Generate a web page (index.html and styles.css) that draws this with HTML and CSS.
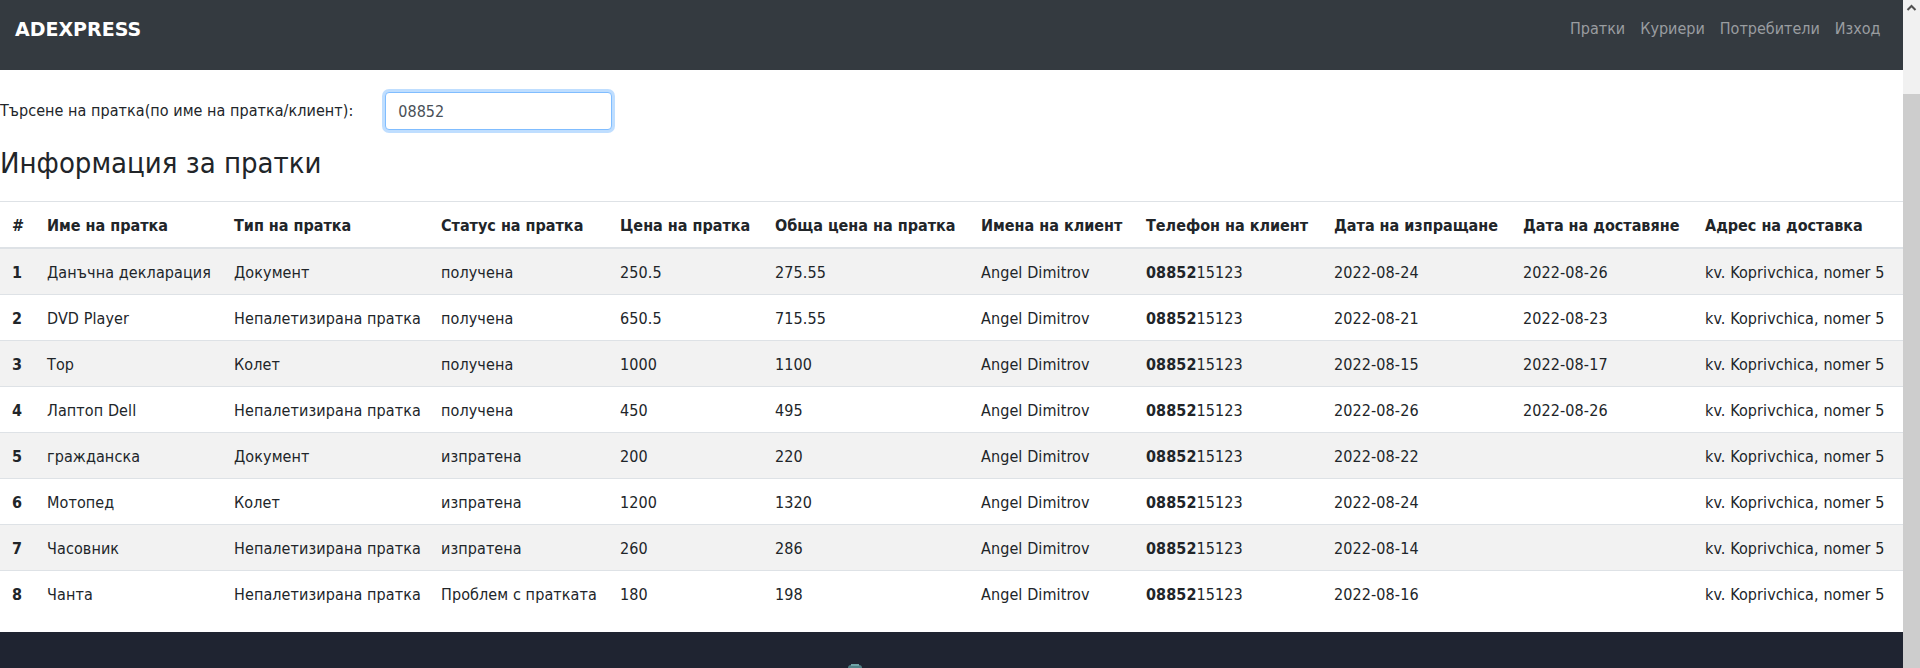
FILE: index.html
```html
<!DOCTYPE html>
<html lang="bg">
<head>
<meta charset="utf-8">
<title>ADEXPRESS</title>
<link rel="stylesheet" href="styles.css">
</head>
<body>
<div class="shell">
  <div class="page">
    <nav class="navbar">
      <a class="brand" href="#">ADEXPRESS</a>
      <ul class="nav">
        <li><a class="nav-link" href="#">Пратки</a></li>
        <li><a class="nav-link" href="#">Куриери</a></li>
        <li><a class="nav-link" href="#">Потребители</a></li>
        <li><a class="nav-link" href="#">Изход</a></li>
      </ul>
    </nav>
    <main class="content">
      <div class="search">
        <label class="search-label" for="q">Търсене на пратка(по име на пратка/клиент):</label>
        <input class="search-input" id="q" type="text" value="08852">
      </div>
      <h3 class="title">Информация за пратки</h3>
      <table class="table">
        <colgroup>
          <col class="c1"><col class="c2"><col class="c3"><col class="c4"><col class="c5"><col class="c6"><col class="c7"><col class="c8"><col class="c9"><col class="c10"><col class="c11">
        </colgroup>
        <thead>
          <tr>
            <th>#</th><th>Име на пратка</th><th>Тип на пратка</th><th>Статус на пратка</th><th>Цена на пратка</th><th>Обща цена на пратка</th><th>Имена на клиент</th><th>Телефон на клиент</th><th>Дата на изпращане</th><th>Дата на доставяне</th><th>Адрес на доставка</th>
          </tr>
        </thead>
        <tbody>
          <tr><th>1</th><td>Данъчна декларация</td><td>Документ</td><td>получена</td><td>250.5</td><td>275.55</td><td>Angel Dimitrov</td><td><b>08852</b>15123</td><td>2022-08-24</td><td>2022-08-26</td><td>kv. Koprivchica, nomer 5</td></tr>
          <tr><th>2</th><td>DVD Player</td><td>Непалетизирана пратка</td><td>получена</td><td>650.5</td><td>715.55</td><td>Angel Dimitrov</td><td><b>08852</b>15123</td><td>2022-08-21</td><td>2022-08-23</td><td>kv. Koprivchica, nomer 5</td></tr>
          <tr><th>3</th><td>Тор</td><td>Колет</td><td>получена</td><td>1000</td><td>1100</td><td>Angel Dimitrov</td><td><b>08852</b>15123</td><td>2022-08-15</td><td>2022-08-17</td><td>kv. Koprivchica, nomer 5</td></tr>
          <tr><th>4</th><td>Лаптоп Dell</td><td>Непалетизирана пратка</td><td>получена</td><td>450</td><td>495</td><td>Angel Dimitrov</td><td><b>08852</b>15123</td><td>2022-08-26</td><td>2022-08-26</td><td>kv. Koprivchica, nomer 5</td></tr>
          <tr><th>5</th><td>гражданска</td><td>Документ</td><td>изпратена</td><td>200</td><td>220</td><td>Angel Dimitrov</td><td><b>08852</b>15123</td><td>2022-08-22</td><td></td><td>kv. Koprivchica, nomer 5</td></tr>
          <tr><th>6</th><td>Мотопед</td><td>Колет</td><td>изпратена</td><td>1200</td><td>1320</td><td>Angel Dimitrov</td><td><b>08852</b>15123</td><td>2022-08-24</td><td></td><td>kv. Koprivchica, nomer 5</td></tr>
          <tr><th>7</th><td>Часовник</td><td>Непалетизирана пратка</td><td>изпратена</td><td>260</td><td>286</td><td>Angel Dimitrov</td><td><b>08852</b>15123</td><td>2022-08-14</td><td></td><td>kv. Koprivchica, nomer 5</td></tr>
          <tr><th>8</th><td>Чанта</td><td>Непалетизирана пратка</td><td>Проблем с пратката</td><td>180</td><td>198</td><td>Angel Dimitrov</td><td><b>08852</b>15123</td><td>2022-08-16</td><td></td><td>kv. Koprivchica, nomer 5</td></tr>
        </tbody>
      </table>
    </main>
    <footer class="footer">
      <svg class="footer-logo" width="16" height="16" viewBox="0 0 16 16" aria-hidden="true">
        <rect x="1" y="1" width="14" height="14" rx="3" fill="#4f7f84"/>
        <rect x="4" y="0" width="8" height="2" fill="#6fa3a6"/>
      </svg>
    </footer>
  </div>
  <div class="scrollbar" aria-hidden="true">
    <div class="sb-arrow">
      <svg width="17" height="17" viewBox="0 0 17 17"><path d="M4.5 10 L8.5 6 L12.5 10" fill="none" stroke="#505050" stroke-width="2"/></svg>
    </div>
    <div class="sb-track"></div>
    <div class="sb-thumb"></div>
  </div>
</div>
</body>
</html>
```

FILE: styles.css
```css
html, body {
  margin: 0;
  padding: 0;
}

body {
  font-family: "DejaVu Sans Condensed", "DejaVu Sans", sans-serif;
  font-stretch: semi-condensed;
  font-size: 16px;
  color: #212529;
  background: #fff;
}

.shell {
  display: flex;
  height: 100vh;
  overflow: hidden;
}

.page {
  flex: 1;
  min-width: 0;
  display: flex;
  flex-direction: column;
}

/* Navbar */
.navbar {
  height: 70px;
  box-sizing: border-box;
  background: #343a40;
  display: flex;
  justify-content: space-between;
  align-items: flex-start;
  padding: 9px 15px 0 15px;
  flex-shrink: 0;
}

.brand {
  font-family: "DejaVu Sans", sans-serif;
  font-stretch: normal;
  font-weight: bold;
  font-size: 19px;
  line-height: 40px;
  color: #fff;
  text-decoration: none;
}

.nav {
  list-style: none;
  margin: 0;
  padding: 0;
  display: flex;
}

.nav-link {
  display: block;
  padding: 0 7.5px;
  line-height: 40px;
  font-size: 16px;
  color: #9a9da0;
  text-decoration: none;
}

/* Content */
.content {
  flex-shrink: 0;
}

.search {
  display: flex;
  align-items: center;
  gap: 32px;
  margin-top: 22px;
}

.search-label {
  font-size: 16px;
  line-height: 24px;
  letter-spacing: 0.05px;
}

.search-input {
  box-sizing: border-box;
  width: 227px;
  height: 38px;
  padding: 6px 12px;
  font-family: inherit;
  font-stretch: inherit;
  font-size: 16px;
  color: #495057;
  background: #fff;
  border: 1px solid #80bdff;
  border-radius: 4px;
  box-shadow: 0 0 0 3px rgba(0, 123, 255, 0.25);
  outline: none;
}

.title {
  margin: 16px 0 21px;
  font-size: 29px;
  line-height: 34px;
  font-weight: 500;
}

/* Table */
.table {
  width: 100%;
  table-layout: fixed;
  border-collapse: collapse;
  margin-bottom: 16px;
}

.c1 { width: 35px; }
.c2 { width: 187px; }
.c3 { width: 207px; }
.c4 { width: 179px; }
.c5 { width: 155px; }
.c6 { width: 206px; }
.c7 { width: 165px; }
.c8 { width: 188px; }
.c9 { width: 189px; }
.c10 { width: 182px; }
.c11 { width: auto; }

.table th,
.table td {
  padding: 13px 12px 11px;
  line-height: 21px;
  text-align: left;
  vertical-align: top;
  white-space: nowrap;
  border-top: 1px solid #dee2e6;
}

.table td {
  letter-spacing: 0.1px;
}

.table th {
  font-weight: bold;
}

.table thead th {
  border-bottom: 2px solid #dee2e6;
}

.table tbody tr:nth-child(odd) {
  background: #f2f2f2;
}

/* Footer */
.footer {
  flex: 1;
  background: #1f2431;
  padding: 32px 0 0 847px;
}

.footer-logo {
  display: block;
}

/* Scrollbar column */
.scrollbar {
  width: 17px;
  flex-shrink: 0;
  display: flex;
  flex-direction: column;
  background: #f1f1f1;
}

.sb-arrow {
  height: 17px;
}

.sb-arrow svg {
  display: block;
}

.sb-track {
  height: 77px;
}

.sb-thumb {
  flex: 1;
  background: #cdcdcd;
}
```
